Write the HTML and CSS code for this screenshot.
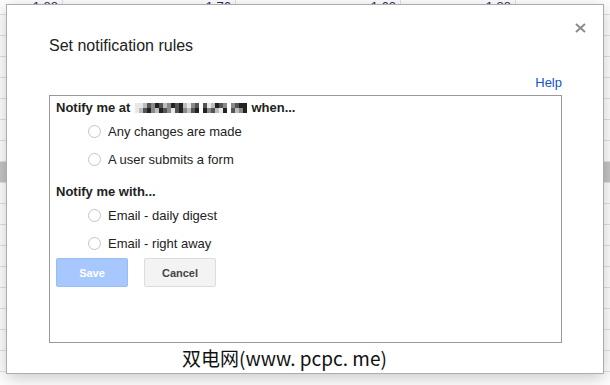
FILE: index.html
```html
<!DOCTYPE html>
<html lang="en">
<head>
    <meta charset="UTF-8">
    <meta name="viewport" content="width=device-width, initial-scale=1.0">
    <title>Set notification rules</title>
    <link rel="stylesheet" href="styles.css">
</head>
<body>
    <div class="sheet">
        <div class="row first">
            <div class="cell c1">1.88</div><div class="cell c2">1.76</div><div class="cell c3">1.63</div><div class="cell c4">1.88</div><div class="cell c5"></div>
        </div>
        <div class="row"><div class="cell c1"></div><div class="cell c2"></div><div class="cell c3"></div><div class="cell c4"></div><div class="cell c5"></div></div>
        <div class="row"><div class="cell c1"></div><div class="cell c2"></div><div class="cell c3"></div><div class="cell c4"></div><div class="cell c5"></div></div>
        <div class="row"><div class="cell c1"></div><div class="cell c2"></div><div class="cell c3"></div><div class="cell c4"></div><div class="cell c5"></div></div>
        <div class="row"><div class="cell c1"></div><div class="cell c2"></div><div class="cell c3"></div><div class="cell c4"></div><div class="cell c5"></div></div>
        <div class="row"><div class="cell c1"></div><div class="cell c2"></div><div class="cell c3"></div><div class="cell c4"></div><div class="cell c5"></div></div>
        <div class="row"><div class="cell c1"></div><div class="cell c2"></div><div class="cell c3"></div><div class="cell c4"></div><div class="cell c5"></div></div>
        <div class="row"><div class="cell c1"></div><div class="cell c2"></div><div class="cell c3"></div><div class="cell c4"></div><div class="cell c5"></div></div>
        <div class="row band"><div class="cell c1"></div><div class="cell c2"></div><div class="cell c3"></div><div class="cell c4"></div><div class="cell c5"></div></div>
        <div class="row"><div class="cell c1"></div><div class="cell c2"></div><div class="cell c3"></div><div class="cell c4"></div><div class="cell c5"></div></div>
        <div class="row"><div class="cell c1"></div><div class="cell c2"></div><div class="cell c3"></div><div class="cell c4"></div><div class="cell c5"></div></div>
        <div class="row"><div class="cell c1"></div><div class="cell c2"></div><div class="cell c3"></div><div class="cell c4"></div><div class="cell c5"></div></div>
        <div class="row"><div class="cell c1"></div><div class="cell c2"></div><div class="cell c3"></div><div class="cell c4"></div><div class="cell c5"></div></div>
        <div class="row"><div class="cell c1"></div><div class="cell c2"></div><div class="cell c3"></div><div class="cell c4"></div><div class="cell c5"></div></div>
        <div class="row"><div class="cell c1"></div><div class="cell c2"></div><div class="cell c3"></div><div class="cell c4"></div><div class="cell c5"></div></div>
        <div class="row"><div class="cell c1"></div><div class="cell c2"></div><div class="cell c3"></div><div class="cell c4"></div><div class="cell c5"></div></div>
        <div class="row"><div class="cell c1"></div><div class="cell c2"></div><div class="cell c3"></div><div class="cell c4"></div><div class="cell c5"></div></div>
        <div class="row"><div class="cell c1"></div><div class="cell c2"></div><div class="cell c3"></div><div class="cell c4"></div><div class="cell c5"></div></div>
    </div>

    <div class="dialog">
        <div class="dialog-title">Set notification rules</div>
        <span class="close" title="Close">
            <svg width="11" height="10" viewBox="0 0 11 10"><path d="M1 1 L10 9 M10 1 L1 9" stroke="#8c8c8c" stroke-width="2" fill="none"/></svg>
        </span>
        <div class="help-row"><a class="help" href="#">Help</a></div>

        <div class="rules">
            <div class="heading"><span class="lead">Notify me at</span><span class="mask g1">
                <i class="a"></i><i class="a"></i><i class="b"></i><i class="d"></i><i class="c"></i><i class="e"></i><i class="d"></i><i class="b"></i><i class="c"></i><i class="e"></i><i class="d"></i><i class="e"></i><i class="b"></i><i class="a"></i><i class="c"></i><i class="d"></i>
                <i class="a"></i><i class="b"></i><i class="d"></i><i class="e"></i><i class="c"></i><i class="b"></i><i class="e"></i><i class="d"></i><i class="c"></i><i class="a"></i><i class="d"></i><i class="e"></i><i class="c"></i><i class="b"></i><i class="d"></i><i class="e"></i>
            </span><span class="mask g2">
                <i class="d"></i><i class="a"></i><i class="b"></i><i class="e"></i><i class="d"></i><i class="c"></i>
                <i class="e"></i><i class="c"></i><i class="d"></i><i class="b"></i><i class="a"></i><i class="e"></i>
            </span><span class="mask g3">
                <i class="c"></i><i class="d"></i><i class="e"></i><i class="e"></i>
                <i class="d"></i><i class="b"></i><i class="c"></i><i class="e"></i>
            </span><span class="tail">when...</span></div>
            <div class="options">
                <label class="option"><span class="radio"></span>Any changes are made</label>
                <label class="option"><span class="radio"></span>A user submits a form</label>
            </div>

            <div class="heading second">Notify me with...</div>
            <div class="options">
                <label class="option"><span class="radio"></span>Email - daily digest</label>
                <label class="option"><span class="radio"></span>Email - right away</label>
            </div>

            <div class="buttons">
                <button class="btn save" disabled>Save</button>
                <button class="btn cancel">Cancel</button>
            </div>
        </div>

        <div class="watermark">双电网(www. pcpc. me)</div>
    </div>
</body>
</html>
```

FILE: styles.css
```css
body {
    margin: 0;
    width: 610px;
    height: 385px;
    overflow: hidden;
    position: relative;
    background-color: #fff;
    font-family: "Liberation Sans", Arial, sans-serif;
}

/* spreadsheet behind the dialog */
.sheet {
    display: flex;
    flex-direction: column;
}
.row {
    display: flex;
    flex: none;
    height: 21px;
    box-sizing: border-box;
    border-bottom: 1px solid #e2e2e2;
}
.row.first {
    height: 15px;
}
.row.band {
    background-color: #c6c6c6;
}
.cell {
    box-sizing: border-box;
    border-right: 1px solid #e2e2e2;
    padding: 0 4px;
    font-size: 13px;
    line-height: 13px;
    text-align: right;
    color: #1c2b6b;
}
.c1 { width: 63px; }
.c2 { width: 173px; }
.c3 { width: 165px; }
.c4 { width: 115px; }
.c5 { flex: 1; border-right: none; }

/* dialog */
.dialog {
    position: absolute;
    left: 6px;
    top: 4px;
    width: 598px;
    height: 370px;
    box-sizing: border-box;
    padding: 30px 41px 30px 42px;
    background-color: #fff;
    border: 1px solid #acacac;
    box-shadow: 0 4px 16px rgba(0, 0, 0, 0.22);
    color: #222;
}
.dialog-title {
    font-size: 16px;
    line-height: 22px;
}
.close {
    position: absolute;
    top: 18px;
    right: 17px;
    display: flex;
}
.help-row {
    display: flex;
    justify-content: flex-end;
    margin-top: 18px;
}
.help {
    font-size: 13px;
    line-height: 16px;
    color: #15c;
    text-decoration: none;
}

.rules {
    margin-top: 4px;
    height: 248px;
    box-sizing: border-box;
    border: 1px solid #999;
    padding: 4px 6px;
    font-size: 13px;
}
.heading {
    font-weight: bold;
    line-height: 16px;
    display: flex;
    align-items: center;
}
.heading .lead {
    margin-right: 5px;
}
.heading .tail {
    margin-left: 4px;
}
.heading.second {
    margin-top: 11px;
}

/* pixelated address */
.mask {
    display: grid;
    grid-auto-rows: 5px;
    height: 10px;
    margin-right: 4px;
}
.mask.g1 { grid-template-columns: repeat(16, 4px); }
.mask.g2 { grid-template-columns: repeat(6, 4px); }
.mask.g3 { grid-template-columns: repeat(4, 4px); margin-right: 0; }
.mask i { display: block; }
.mask .a { background-color: #e8e8e8; }
.mask .b { background-color: #bdbdbd; }
.mask .c { background-color: #8a8a8a; }
.mask .d { background-color: #555; }
.mask .e { background-color: #222; }

.options {
    margin-top: 1px;
}
.option {
    display: flex;
    align-items: center;
    gap: 7px;
    height: 28px;
    padding-left: 32px;
}
.radio {
    width: 13px;
    height: 13px;
    box-sizing: border-box;
    border: 1px solid #c4c4c4;
    border-radius: 50%;
    background-color: #fff;
}

.buttons {
    display: flex;
    gap: 16px;
    margin-top: 1px;
}
.btn {
    width: 72px;
    height: 29px;
    box-sizing: border-box;
    border-radius: 2px;
    font-family: "Liberation Sans", Arial, sans-serif;
    font-size: 11px;
    font-weight: bold;
    padding: 0;
}
.save {
    background-color: #a6c8fe;
    border: 1px solid #98bcf6;
    color: #fff;
}
.cancel {
    background-color: #f3f3f3;
    border: 1px solid #dcdcdc;
    color: #444;
}

/* site watermark over the screenshot */
.watermark {
    position: absolute;
    left: 175px;
    top: 343px;
    font-family: "Noto Sans CJK SC", sans-serif;
    font-size: 19px;
    line-height: 20px;
    color: #111;
    text-shadow: 0 0 2px #fff, 0 0 2px #fff;
}
```
